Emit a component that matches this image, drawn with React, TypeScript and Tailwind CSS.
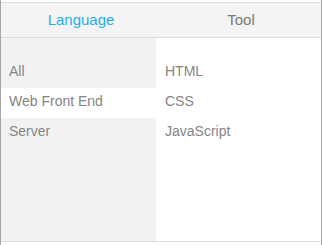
import React from "react";

export default function App() {
  const left = ["All", "Web Front End", "Server"];
  const right = ["HTML", "CSS", "JavaScript"];
  return (
    <div
      className="w-[322px] h-[245px] bg-white border-x border-[#a6a6a6] flex flex-col"
      style={{ fontFamily: '"Liberation Sans", Arial, sans-serif' }}
    >
      <div className="h-[2px] bg-white" />
      <div className="h-[36px] bg-[#f4f4f4] border-y border-[#dcdcdc] flex text-[15px]">
        <div className="w-1/2 flex items-center justify-center pt-[1px] text-[#1cb0e6]">Language</div>
        <div className="w-1/2 flex items-center justify-center pt-[1px] text-[#7a7a7a]">Tool</div>
      </div>
      <div className="h-[204px] flex border-b border-[#dcdcdc]">
        <div className="w-[155px] bg-[#f2f2f2] pt-[20px] flex flex-col">
          {left.map((t, i) => (
            <div
              key={t}
              className={`h-[30px] flex items-center pl-[8px] pb-[4px] text-[14px] text-[#858585] ${i === 1 ? "bg-white" : ""}`}
            >
              {t}
            </div>
          ))}
        </div>
        <div className="flex-1 bg-white pt-[20px] flex flex-col">
          {right.map((t) => (
            <div key={t} className="h-[30px] flex items-center pl-[9px] pb-[4px] text-[14px] text-[#858585]">
              {t}
            </div>
          ))}
        </div>
      </div>
    </div>
  );
}
